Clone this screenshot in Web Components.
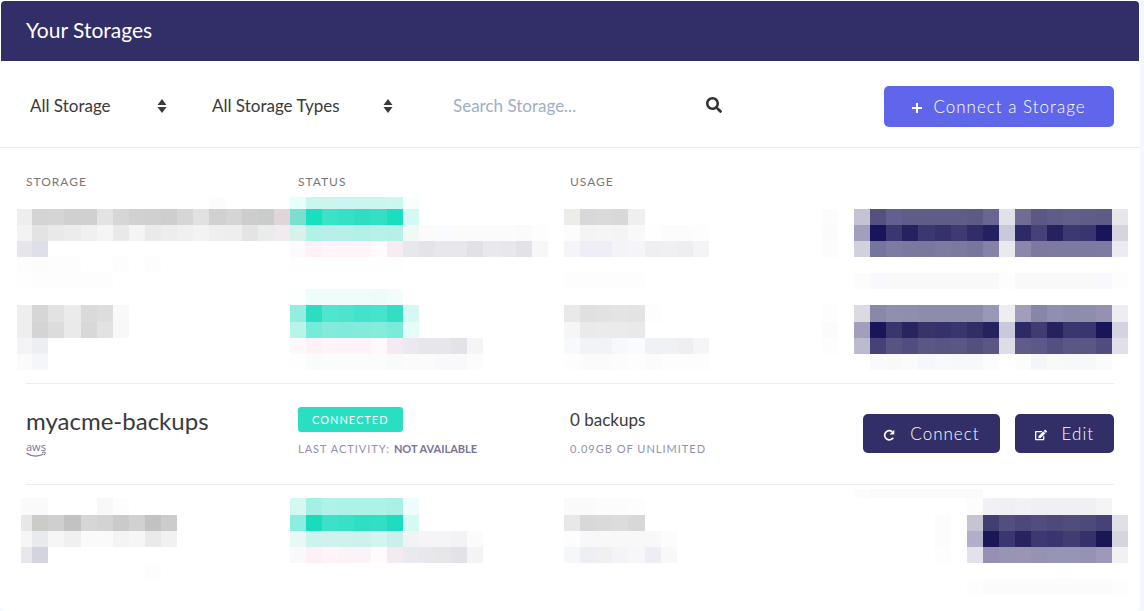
<!DOCTYPE html>
<html lang="en">
<head>
<meta charset="utf-8">
<title>Your Storages</title>
<style>
  html, body { margin: 0; }
  body { background: #f3f8ff; color: #3a3a3a; font: 17px/24px Lato, "Open Sans", sans-serif; }
</style>
</head>
<body>
<storage-panel></storage-panel>
<script>
const define = (name, html, setup) => {
  const template = document.createElement('template');
  template.innerHTML = html;
  customElements.define(name, class extends HTMLElement {
    constructor() {
      super();
      this.attachShadow({ mode: 'open' }).append(template.content.cloneNode(true));
    }
    connectedCallback() { if (setup) setup(this, this.shadowRoot); }
  });
};

const icons = {
  plus: ['0 0 10 10', '<path d="M4 0h2v4h4v2H6v4H4V6H0V4h4z"/>'],
  search: ['0 0 512 512', '<path d="M505 442.7L405.3 343c-4.500-4.500-10.600-7-17-7H372c27.600-35.300 44-79.700 44-128C416 93.100 322.900 0 208 0S0 93.100 0 208s93.100 208 208 208c48.300 0 92.700-16.400 128-44v16.300c0 6.400 2.500 12.500 7 17l99.700 99.700c9.400 9.400 24.600 9.400 33.900 0l28.300-28.300c9.400-9.400 9.400-24.600.1-34zM208 336c-70.700 0-128-57.200-128-128 0-70.700 57.200-128 128-128 70.700 0 128 57.200 128 128 0 70.700-57.200 128-128 128z"/>'],
  redo: ['0 0 12 12', '<path d="M10.200 8.700A4.600 4.600 0 1 1 9.300 2.800" fill="none" stroke="currentColor" stroke-width="1.700"/><path d="M11.300.7v4.700H6.600z"/>'],
  edit: ['0 0 576 512', '<path d="M402.600 83.200l90.200 90.200c3.800 3.800 3.800 10 0 13.800L274.400 405.600l-92.800 10.300c-12.400 1.400-22.900-9.100-21.500-21.500l10.300-92.800L388.800 83.200c3.800-3.800 10-3.800 13.800 0zm162-22.900l-48.800-48.800c-15.200-15.200-39.900-15.200-55.200 0l-35.400 35.400c-3.800 3.800-3.800 10 0 13.800l90.200 90.200c3.800 3.800 10 3.800 13.800 0l35.400-35.400c15.200-15.300 15.200-40 0-55.200zM384 346.200V448H64V128h229.800c3.200 0 6.200-1.300 8.500-3.500l40-40c7.600-7.600 2.200-20.500-8.500-20.500H48C21.500 64 0 85.500 0 112v352c0 26.500 21.500 48 48 48h352c26.500 0 48-21.500 48-48V306.200c0-10.700-12.900-16-20.500-8.500l-40 40c-2.200 2.300-3.500 5.300-3.500 8.500z"/>'],
  sort: ['0 0 10 16', '<path d="M5 1l4.500 6H.5zM5 15L.5 9h9z"/>']
};

define('ui-icon', `
<style>
  :host { display: inline-flex; flex: none; width: 12px; height: 12px; }
  svg { width: 100%; height: 100%; fill: currentColor; }
</style>`, (el, root) => {
  const [box, body] = icons[el.getAttribute('name')];
  root.innerHTML += `<svg viewBox="${box}" aria-hidden="true">${body}</svg>`;
});

define('ui-button', `
<style>
  :host { display: inline-block; }
  button {
    display: flex; align-items: center; justify-content: center; gap: 15px;
    width: 100%; height: 39px; padding: 0 20px; border: 0; border-radius: 5px;
    background: #322e67; color: #fff; cursor: pointer;
    font: inherit; font-weight: 300; letter-spacing: 1px; white-space: nowrap;
  }
  ui-icon { margin-top: 2px; }
  :host([primary]) button { height: 41px; gap: 11px; background: #6066ec; }
  :host([primary]) ui-icon { width: 10px; height: 10px; }
</style>
<button type="button"><span><slot></slot></span></button>`, (el, root) => {
  const icon = document.createElement('ui-icon');
  icon.setAttribute('name', el.getAttribute('icon'));
  root.querySelector('button').prepend(icon);
});

define('ui-select', `
<style>
  :host { display: grid; align-items: center; }
  select, ui-icon { grid-area: 1 / 1; }
  select {
    appearance: none; width: 100%; height: 40px; padding: 0 24px 2px 4px;
    border: 0; background: none; color: inherit; font: inherit;
  }
  ui-icon { justify-self: end; width: 10px; height: 16px; margin: 0 3px 2px 0; pointer-events: none; }
</style>
<select><option></option></select><ui-icon name="sort"></ui-icon>`, (el, root) => {
  root.querySelector('select').setAttribute('aria-label', el.getAttribute('label'));
  root.querySelector('option').textContent = el.getAttribute('value');
});

define('search-field', `
<style>
  :host { display: flex; align-items: center; }
  input { flex: 1; min-width: 0; height: 40px; padding: 0 0 2px; border: 0; background: none; color: inherit; font: inherit; outline: 0; box-sizing: border-box; }
  input::placeholder { color: #a0aec6; opacity: 1; }
  button { display: flex; padding: 0 0 4px; border: 0; background: none; color: #333; cursor: pointer; }
  ui-icon { width: 16px; height: 16px; }
</style>
<input type="search" placeholder="Search Storage..." aria-label="Search Storage">
<button type="button" aria-label="Search"><ui-icon name="search"></ui-icon></button>`);

define('status-badge', `
<style>
  :host { display: block; width: max-content; padding: 0 14px; border-radius: 3px; background: #29dec1; color: #fff; font-size: 11px; line-height: 25px; letter-spacing: 1px; }
</style><slot></slot>`);

define('aws-mark', `
<style>
  :host { display: block; width: 20px; height: 15px; color: #77739a; }
  svg { display: block; overflow: visible; }
</style>
<svg width="20" height="15" viewBox="0 0 20 15" role="img" aria-label="aws">
  <text x="0" y="8" font-family="Open Sans, sans-serif" font-size="11" fill="currentColor">aws</text>
  <path d="M.5 10.200Q9 15.500 17.500 11" fill="none" stroke="currentColor" stroke-width="1.300"/>
  <path d="M16 9.600q2-1 3.300-.3 0 1.700-1.300 3" fill="none" stroke="currentColor"/>
</svg>`);

/* Obscured values: each line is "top bottom | colour colour ...", placed between the column edges. */
define('value-mosaic', `
<style>
  :host { display: block; height: 92px; }
  svg { display: block; width: 100%; height: 100%; overflow: visible; shape-rendering: crispEdges; }
</style>`, (el, root) => {
  const edges = el.getAttribute('edges').split(' ').map(Number);
  const rects = el.textContent.trim().split('\n').map(line => {
    const [span, cells] = line.split('|');
    const [top, bottom] = span.trim().split(' ').map(Number);
    return cells.trim().split(/\s+/).map((c, i) => c === '-' ? '' :
      `<rect x="${edges[i]}" y="${top}" width="${edges[i + 1] - edges[i]}" height="${bottom - top}" fill="#${c}"/>`).join('');
  }).join('');
  root.innerHTML += `<svg aria-hidden="true">${rects}</svg>`;
});

const nameEdges = '-9 6 22 38 55 71 87 103 119 135 151 167 183 200 216 232 248 264';
const lastEdges = '-5 6 22 38 55 71 87 103 119 135 151';
const statusEdges = '-8 8 24 40 56 73 89 105 121 137 153 169 185 202 218 234 250';
const usageEdges = '-6 10 26 42 58 75 91 107 123 139';
const actionEdges = '0 16 32 48 64 80 96 113 129 145 161 177 193 209 225 241 258 274 290 306';

define('storage-table', `
<style>
  :host { display: block; padding: 22px 26px 0; }
  table { width: 100%; border-collapse: collapse; table-layout: fixed; }
  th { height: 24px; padding: 0; text-align: left; font-size: 12px; line-height: 24px; font-weight: 400; letter-spacing: 1px; color: #777; }
  td { height: 100px; padding: 0; vertical-align: top; }
  .line td { border-top: 1px solid #ececee; }
  .first td { height: 96px; }
  .second td { height: 93px; }
  .name { padding-top: 21px; font-size: 24px; line-height: 32px; }
  aws-mark { margin-top: 6px; }
  .status { padding-top: 23px; }
  .small { margin: 5px 0 0; font-size: 11px; line-height: 24px; letter-spacing: 1px; color: #9391ae; }
  .small b { color: #77739a; letter-spacing: 0; }
  .usage { padding-top: 24px; }
  .actions { display: flex; justify-content: flex-end; gap: 15px; padding-top: 30px; }
  .right { margin: 0 -14px 0 -20px; }
</style>
<table>
  <thead><tr><th scope="col">STORAGE</th><th scope="col">STATUS</th><th scope="col">USAGE</th><th scope="col" aria-label="Actions"></th></tr></thead>
  <tbody>
    <tr class="first">
      <td><value-mosaic edges="${nameEdges}">
        3 15 | - - - - - - - - - - - - fcfcfc
        15 31 | eeeeee d4d4d4 d5d5d5 d0d0d0 d0d0d0 e3e3e3 d6d6d6 d1d1d1 d0d0d0 cecece d6d6d6 e1e1e1 d1d1d1 d5d5d5 cccdcc c9cccb e0d5d8
        31 47 | f3f3f3 e3e3e3 e9e9e9 ececec f0f0f0 f5f5f5 e9e9e9 f4f4f4 eaeaea ededed f0f0f0 f3f3f3 efefef eeeeee e4e4e4 e9ecea f0ebee
        47 63 | e6e5ec dfdfe9
        63 79 | fdfdfd fcfcfc fdfdfd fdfdfd - - fdfdfd - fdfdfd
        79 94 | fefefe fdfdfd fdfdfd fdfdfd fdfdfd fdfdfd
      </value-mosaic></td>
      <td><value-mosaic edges="${statusEdges}">
        3 15 | e5fffa c9f6ef cdf5f0 cbf5f0 cbf5ef cbf5ef ccf6f0 f5fffb
        15 31 | 7adfce 18dfbf 3be2c8 36e0c6 2eddc2 34dfc5 1bddbf d3f9f2
        31 47 | d8f1ed b1f2e7 b7f0e8 b7f0e8 b3f0e7 b7f2e9 b8f0e8 f1f9f8 fbfbfb fafbfe fbfbfb fbfbfb fbfbfb fbfbfb fafafa fdfdfd
        47 63 | fef9fc fff1f7 fff5fa fff4fa fff4fa fffafd f7ebf4 e9e7ee e3e3e8 e8e7ed e7e7ec e2e1e8 e8e8ed e8e7ed e2e2e8 f7f7f8
        63 79 | fdfefd fdfefd fdfefd fdfefd fdfefd fdfefd fdfefd
      </value-mosaic></td>
      <td><value-mosaic edges="${usageEdges}">
        15 31 | ecece9 d8d8d8 dadada d8d8d8 efefef
        31 47 | fcfcfc f4f4f4 f5f5f5 f4f4f4 f9f9f9 fefefe fcfcfc fcfcfc fdfdfd
        47 63 | f5f5f9 efeef6 efeef6 f4f4f8 f5f5f9 efeff2 f0f0f3 eeeef1 f4f4f7
        79 95 | fdfdfd fdfdfd fdfdfd fdfdfd fdfdfd
      </value-mosaic></td>
      <td><value-mosaic class="right" edges="${actionEdges}">
        15 31 | fcfcfc - c4c3d4 55517f 626090 5f5c89 5f5c89 5f5c89 5f5c89 5d5a87 6a6693 e1e1ea 706c94 5b5786 5f5c89 62608b 5f5c89 5f5b89 e6e6eb
        31 47 | fbfbfb - a19fbd 18155a 3a366f 252260 3b3770 35316a 3f3b72 312d68 232160 cac9dc 2e2a65 464278 26215f 3c3870 39356f 18155a d6d4e0
        47 63 | fcfcfc - d0d0df 74749e 7e7ba2 7b789e 7b78a0 7e7ba2 7c799f 77769d 8582a8 e9e9f0 8a88aa 7c789f 7d7aa2 7d7aa2 7d7aa2 7e7ba2 ecebf1
        79 95 | - - fcfcfc f8f9fc f9f9f9 f9f9f9 f9f9f9 f9f9f9 f9f9f9 f9f9f9 f9f9f9 fdfdfd f9f9f9 f9f9f9 f9f9f9 f9f9f9 f9f9f9 f8f9fc fdfdfd
      </value-mosaic></td>
    </tr>
    <tr class="second">
      <td><value-mosaic edges="${nameEdges}">
        15 32 | eeeeee d6d6d6 e2e2e2 ebebeb dadada dddddd f9f9f9
        32 48 | eeeeee d4d4d4 dcdcdc eaeaea d8d8d8 e2e2e2 f8f8f8
        48 64 | f4f4f8 ededf4
        64 80 | fbfbfc f5f6f9
      </value-mosaic></td>
      <td><value-mosaic edges="${statusEdges}">
        -1 15 | fcfffe effcfc f0fcf9 f0fcf9 f0fcf9 eefcf9 f2fdfb
        15 32 | 92eee1 2dddc1 50e5cf 4ce4cd 44e2ca 48e3cc 32dfc4 d7f8f2
        32 48 | b7f5ea 75ebd9 84ebdc 80ebdc 82ebdb 83ecdd 7aebda e6fcf9
        48 64 | fff8fb fff1f5 fdf5f8 fff2f8 fff2f8 fff9fc f5eaf4 ebe9ef e6e6ec e6e6ec e2e2e8 f5f5f7
        64 80 | fdfefd f9fcfb fbfdfc fbfdfc fbfdfc fbfdfc f9fbfa fbfbfb fbfbfb f9f9fc f9f9fc fcfcfc
      </value-mosaic></td>
      <td><value-mosaic edges="${usageEdges}">
        15 32 | e9e9e9 e0e0e0 e2e2e2 e4e4e4 e3e3e3 fdfdfd
        32 48 | f6f6f6 eaeaea ebebeb ebebeb e9e9e9
        48 64 | f8f9fc f2f3f6 f2f3f6 f7f8fb fafbfe f0f1f4 f0f1f4 efeff2 f5f5f8
        64 80 | fdfdfd fbfbfb fbfbfb fcfcfc fdfdfd fbfbfb fdfdfd fdfdfd fdfdfd
      </value-mosaic></td>
      <td><value-mosaic class="right" edges="${actionEdges}">
        15 32 | fdfdfd - dad9e4 8988a9 918fb0 908eae 8e8cad 8e8cad 8e8cad 8e8cad 9a98b7 eeedf2 a19dbb 8785a8 918fb1 8e8cad 8f8dae 9691b2 eeedf3
        32 48 | fbfbfb - a19fbd 18155a 39356d 28245f 383469 35316a 39356f 312d65 262260 cac9dc 2e2a65 403c72 26225f 3a366f 39356f 18155a d5d3e2
        48 64 | fdfdfd - bcbad0 464279 575484 514d80 5a5786 585584 5a5786 535080 5a5686 dddde7 5f5b8a 5c5889 524f81 5a5686 5a5686 514c80 e1dfeb
        64 80 | - - - fafafd f9f9fa fbfbfb f6f7fa f9f9fb f7f8fa f7f8fa fcfcfc - fcfcfc f4f5f8 f9f9fa f7f8fa f7f8fa fbfbfd
      </value-mosaic></td>
    </tr>
    <tr class="line">
      <td><div class="name">myacme-backups</div><aws-mark></aws-mark></td>
      <td><div class="status"><status-badge>CONNECTED</status-badge><p class="small">LAST ACTIVITY: <b>NOT AVAILABLE</b></p></div></td>
      <td><div class="usage">0 backups<p class="small">0.09GB OF UNLIMITED</p></div></td>
      <td><div class="actions"><ui-button icon="redo">Connect</ui-button><ui-button icon="edit">Edit</ui-button></div></td>
    </tr>
    <tr class="line">
      <td><value-mosaic edges="${lastEdges}">
        13 30 | fafafa fafafa - - - f8f8f8 fdfdfd
        30 46 | e7e7e7 cbcbc8 cfcfcf c2c2c2 d6d6d6 d3d3d3 cacaca d1d1d1 c2c2c2 cccccc
        46 62 | f6f6f6 e9eaee f6f6f6 f0f0f0 fafafa fafafa f4f4f4 f6f6f6 eaeaea f1f1f1
        62 78 | e7e7ee d4d4e0
        78 94 | - - - - - - - - fdfdfd
      </value-mosaic></td>
      <td><value-mosaic edges="${statusEdges}">
        13 30 | d3f9f2 a5f0e4 aff2e7 adf2e6 adf2e6 adf2e6 abf0e6 effcfc
        30 46 | 8aeee0 19dcbd 3de1c8 38e0c6 2edfc3 33dfc4 1edcbf d5faf4
        46 62 | e9f8f7 cdf3ef d0f2ef d0f2ef cdf1ed d2f5ef cdefeb f0f4f5 f5f5f8 f5f5f8 f3f3f6 fbfbfb
        62 78 | faf8fa fff0f7 fff5f9 faf4f8 faf4f8 fffafe f2ebf1 eae9ef e7e7ec e7e7ea e2e2e8 f4f4f7
      </value-mosaic></td>
      <td><value-mosaic edges="${usageEdges}">
        13 30 | fafafa fafafa fcfcfc fcfcfc fdfdfd
        30 46 | e8e8e8 d8d8d8 dadada dcdcdc d8d8d8
        46 62 | fdfdfd f8f8fa f8f8f8 f8f8f8 f8f8f8 f8f8f8 fcfcfc
        62 78 | f6f7fa eeeef5 f0f0f3 f4f4f8 f7f7fa eeedf5 f8f8f8
      </value-mosaic></td>
      <td><value-mosaic class="right" edges="${actionEdges}">
        4 13 | - - fcfcfc fafafa fafafa fafafa fafafa fafafa fafafa fafafa
        13 30 | - - - - - - - - - fcfcfd f0f0f5 efeff5 f1f1f6 efeff4 efeff4 efeff4 efeff4 f4f4f6
        30 46 | - - - - - - - fcfcfc - c5c4d3 413e73 524e7f 4c487b 514d7e 4d4a7b 504d7d 4c497b 464279 e0e0e9
        46 62 | - - - - - - - fcfcfc - b0aec9 1b1757 3a3670 28245f 3c3870 39356e 413d72 35316a 1b1757 d5d5df
        62 78 | - - - - - - - fdfdfd - e3e2eb 9691b2 9695b3 9995b3 9693b2 9695b3 9695b3 9693b2 9e99b9 f1f1f4
        94 110 | - - - - - - - - - fdfdfd fbfbfb fbfbfb fbfbfb fbfbfb fbfbfb fbfbfb fbfbfb fbfbfb fdfdfd
      </value-mosaic></td>
    </tr>
  </tbody>
</table>`);

define('storage-panel', `
<style>
  :host { display: block; box-sizing: border-box; min-height: 100vh; margin-right: 4px; padding-top: 1px; border-radius: 5px; background: #fff; }
  header { margin: 0 1px; padding: 13px 25px 15px; border-radius: 4px 4px 0 0; background: #322e67; color: #fff; }
  h1 { margin: 0; font-size: 21px; line-height: 32px; font-weight: 400; }
  form { display: flex; align-items: center; gap: 38px; padding: 25px 26px 20px; border-bottom: 1px solid #ececee; }
  .scope { width: 144px; }
  .types { width: 188px; }
  search-field { width: 269px; margin-left: 19px; }
  ui-button { width: 230px; margin-left: auto; }
</style>
<header><h1>Your Storages</h1></header>
<form role="search" onsubmit="return false">
  <ui-select class="scope" label="Storage" value="All Storage"></ui-select>
  <ui-select class="types" label="Storage type" value="All Storage Types"></ui-select>
  <search-field></search-field>
  <ui-button primary icon="plus">Connect a Storage</ui-button>
</form>
<storage-table></storage-table>`);
</script>
</body>
</html>
